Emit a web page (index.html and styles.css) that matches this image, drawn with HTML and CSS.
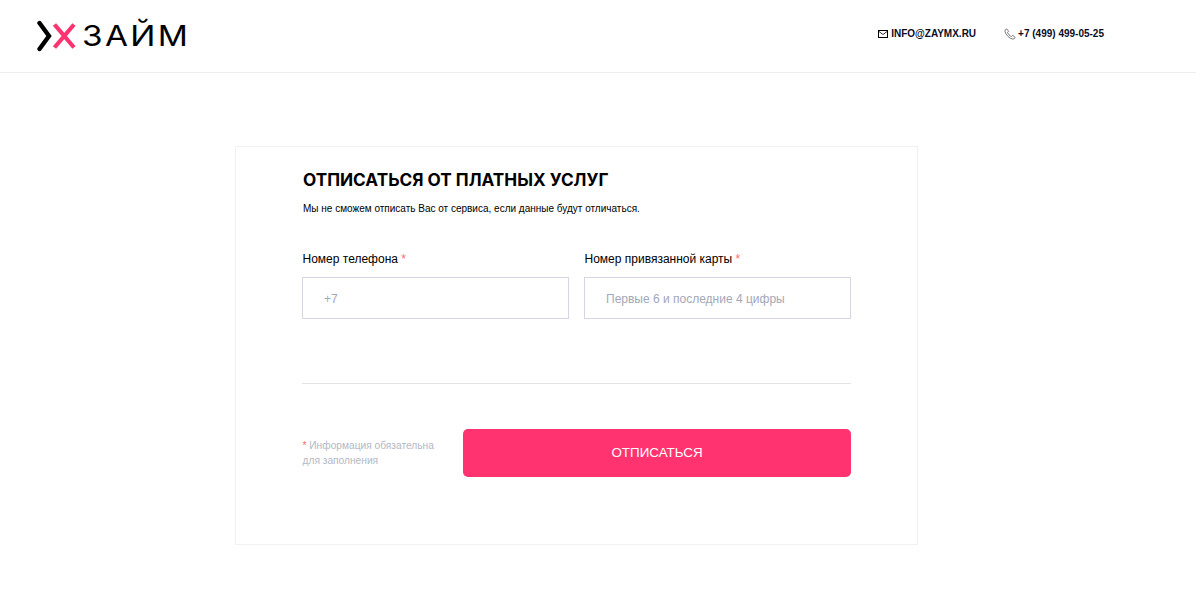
FILE: index.html
```html
<!DOCTYPE html>
<html>
	<head>
		<meta charset="utf-8">
		<title>Отписаться от платных услуг</title>
		<link rel="stylesheet" href="styles.css">
	</head>
	<body>
		<header class="header">
			<a class="logo" href="#">
				<svg class="logo-mark" width="42" height="32" viewBox="0 0 42 32">
					<path d="M2.500 3 L12 16 L2.500 29" fill="none" stroke="#000" stroke-width="4.400" stroke-linecap="round" stroke-linejoin="miter"/>
					<path d="M17.500 4.500 L37 27.500 M37 4.500 L17.500 27.500" fill="none" stroke="#ff3370" stroke-width="4.200"/>
				</svg>
				<span class="logo-text">ЗАЙМ</span>
			</a>
			<div class="contacts">
				<a class="contact contact-mail" href="#">
					<svg width="10" height="8" viewBox="0 0 10 8">
						<rect x="0.500" y="0.500" width="9" height="7" fill="none" stroke="#000" stroke-width="1"/>
						<path d="M1 1.500 L5 4.500 L9 1.500" fill="none" stroke="#000" stroke-width="0.800"/>
					</svg>
					INFO@ZAYMX.RU
				</a>
				<a class="contact" href="#">
					<svg width="12" height="12" viewBox="0 0 12 12">
						<path d="M1 2.200 L2.600 0.800 L4.600 3.200 L3.500 4.500 C4 6 5.800 7.900 7.400 8.500 L8.800 7.300 L11.200 9.400 L9.800 11 C6 11.600 0.500 6 1 2.200 Z" fill="none" stroke="#555" stroke-width="0.800" stroke-linejoin="round"/>
					</svg>
					+7 (499) 499-05-25
				</a>
			</div>
		</header>

		<main class="main">
			<form class="card">
				<h1 class="title">ОТПИСАТЬСЯ ОТ ПЛАТНЫХ УСЛУГ</h1>
				<p class="subtitle">Мы не сможем отписать Вас от сервиса, если данные будут отличаться.</p>
				<div class="fields">
					<label class="field">
						<span class="field-label">Номер телефона <i class="star">*</i></span>
						<input class="field-input" type="text" placeholder="+7">
					</label>
					<label class="field">
						<span class="field-label">Номер привязанной карты <i class="star">*</i></span>
						<input class="field-input" type="text" placeholder="Первые 6 и последние 4 цифры">
					</label>
				</div>
				<div class="line"></div>
				<div class="bottom">
					<p class="note"><i class="star">*</i> Информация обязательна<br>для заполнения</p>
					<button class="submit" type="button">ОТПИСАТЬСЯ</button>
				</div>
			</form>
		</main>
	</body>
</html>
```

FILE: styles.css
```css
*{box-sizing: border-box;}
html,body{margin: 0;padding: 0;}
body{
	background: #fff;
	color: #000;
	font-family: "Liberation Sans", Arial, sans-serif;
}
a{color: inherit;text-decoration: none;}

.header{
	height: 73px;
	border-bottom: 1px solid #ececec;
	display: flex;
	align-items: flex-start;
	justify-content: space-between;
	padding: 20px 92px 0 37px;
}
.logo{display: flex;align-items: center;gap: 3px;}
.logo-mark{display: block;width: 42px;height: 32px;}
.logo-text{
	font-family: Inter, "Noto Sans", sans-serif;
	font-size: 29px;
	line-height: 32px;
	font-weight: 400;
	letter-spacing: 2px;
	transform: scaleX(1.15);
	transform-origin: left center;
}
.contacts{
	display: flex;
	gap: 28px;
	padding-top: 8px;
	font-size: 10px;
	line-height: 12px;
	font-weight: 700;
	color: #0c0c1e;
}
.contact{display: flex;align-items: center;gap: 2px;}
.contact-mail{gap: 3px;}

.main{padding-top: 73px;}
.card{
	width: 683px;
	height: 399px;
	margin-left: 235px;
	border: 1px solid #f1f1f1;
	padding: 23px 66px 0 66px;
}
.title{
	margin: 0 0 0 1px;
	font-family: Inter, "Liberation Sans", sans-serif;
	font-size: 17.200px;
	line-height: 20px;
	font-weight: 700;
}
.subtitle{
	margin: 13px 0 0 1px;
	font-size: 10px;
	line-height: 12px;
}
.fields{
	display: flex;
	gap: 15px;
	margin-top: 37px;
}
.field{display: block;width: 267px;}
.field-label{
	display: block;
	font-size: 12px;
	line-height: 14px;
	margin: 0 0 11px 0.500px;
}
.star{font-style: normal;color: #ff6b6b;}
.field-input{
	display: block;
	width: 100%;
	height: 42px;
	border: 1px solid #d5d5e3;
	padding: 1px 21px 0;
	font-family: "Liberation Sans", Arial, sans-serif;
	font-size: 12px;
	outline: none;
}
.field-input::placeholder{color: #a3a7b8;opacity: 1;}
.line{
	height: 1px;
	background: #e3e3e8;
	margin-top: 64px;
}
.bottom{
	display: flex;
	align-items: center;
	justify-content: space-between;
	margin-top: 45px;
}
.note{
	margin: 0 0 0 0.500px;
	font-size: 10.200px;
	line-height: 15px;
	color: #b4b8c6;
}
.submit{
	width: 388px;
	height: 48px;
	border: 0;
	border-radius: 5px;
	padding: 0 0 2px;
	background: #ff3370;
	color: #fff;
	font-family: "Liberation Sans", Arial, sans-serif;
	font-size: 13.400px;
	cursor: pointer;
}
```
